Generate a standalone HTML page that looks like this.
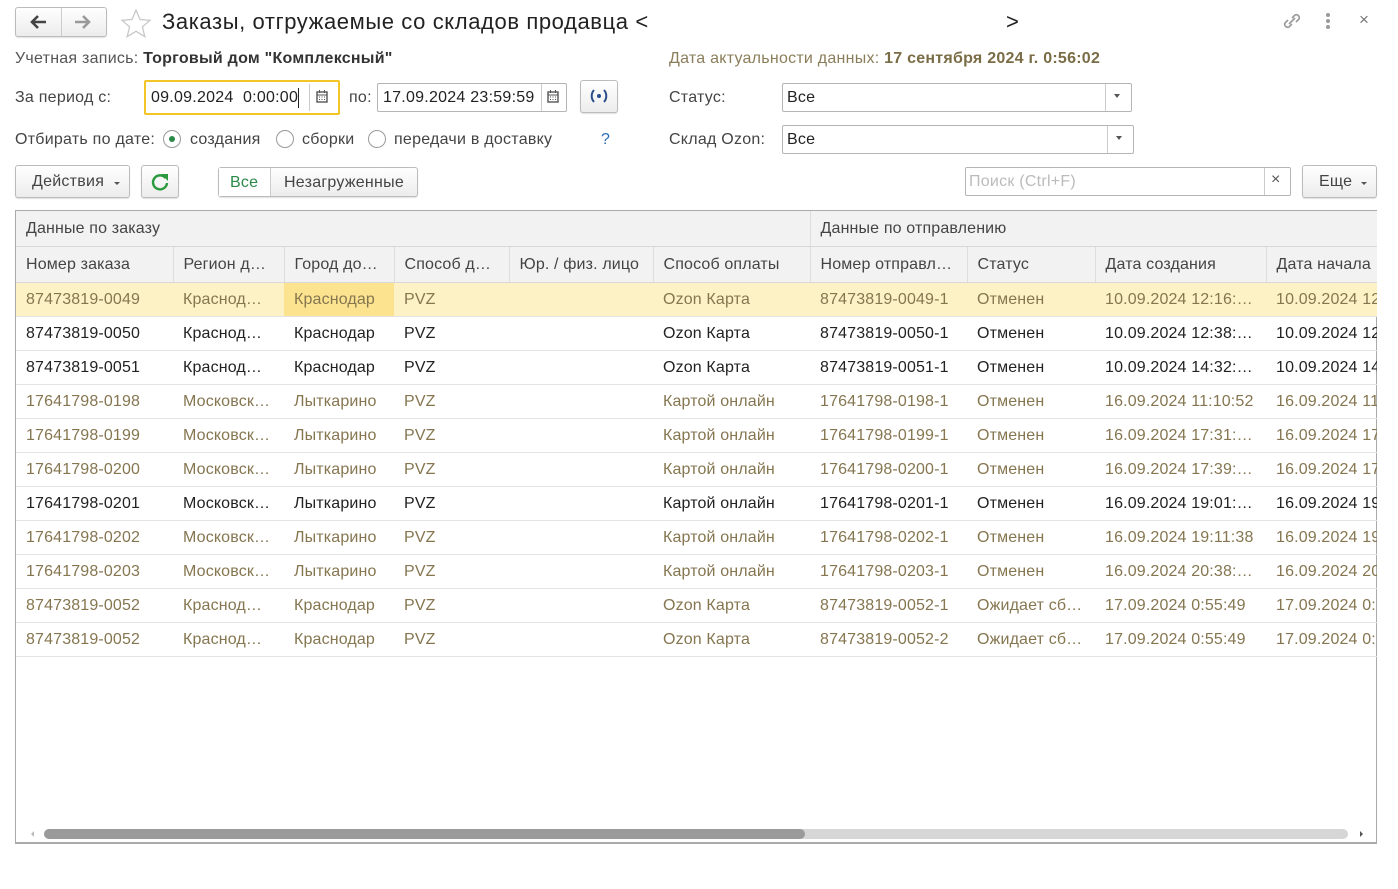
<!DOCTYPE html>
<html><head><meta charset="utf-8"><style>
*{box-sizing:border-box;margin:0;padding:0}
body{width:1398px;height:889px;background:#fff;font-family:"Liberation Sans",Arial,sans-serif;font-size:16px;color:#333;position:relative;overflow:hidden}
.a{position:absolute;white-space:nowrap;letter-spacing:0.25px}
.btn{position:absolute;border:1px solid #bcbcbc;border-radius:3px;background:linear-gradient(#fff,#ececec);box-shadow:0 1px 1px rgba(0,0,0,.12)}
.inp{position:absolute;border:1px solid #b5b5b5;border-radius:2px;background:#fff}
.radio{position:absolute;width:18px;height:18px;border:1px solid #999;border-radius:50%;background:#fff}
table{position:absolute;left:16px;top:211px;border-collapse:collapse;table-layout:fixed;width:1380px}
td{height:34px;padding:2px 10px 0;white-space:nowrap;overflow:hidden;text-overflow:ellipsis;border-bottom:1px solid #e4e4e4;font-size:16px;letter-spacing:0.15px}
tr.h td{background:#f2f2f2;border-right:1px solid #ddd;border-bottom:1px solid #d8d8d8;color:#444;height:36px}
tr.g td{background:#f2f2f2;color:#444;border-bottom:1px solid #d8d8d8;height:35px}
.o td{color:#857650}
.k td{color:#222}
.s td{background:#fdf2c6;color:#857650}
</style></head><body>
<div class="btn" style="left:15px;top:7px;width:92px;height:30px"></div>
<div class="a" style="left:61px;top:8px;width:1px;height:28px;background:#ccc"></div>
<svg class="a" style="left:28px;top:13px" width="20" height="18"><path d="M18 9H5M10 3L4 9l6 6" stroke="#444" stroke-width="2.6" fill="none"/></svg>
<svg class="a" style="left:73px;top:13px" width="20" height="18"><path d="M2 9h13M10 3l6 6-6 6" stroke="#999" stroke-width="2.6" fill="none"/></svg>
<svg class="a" style="left:120px;top:8px" width="32" height="30"><path d="M16 2l4 9.5 10 .8-7.6 6.5 2.4 9.8L16 23.3 7.2 28.6l2.4-9.8L2 12.3l10-.8z" fill="none" stroke="#c8c8c8" stroke-width="1.3"/></svg>
<div class="a" style="left:162px;top:9px;font-size:22px;color:#222;letter-spacing:0.6px">Заказы, отгружаемые со складов продавца &lt;</div>
<div class="a" style="left:1006px;top:9px;font-size:22px;color:#222">&gt;</div>
<svg class="a" style="left:1280px;top:9px" width="24" height="24"><path d="M9 15l6-6M8 11l-3 3a3 3 0 004 4l3-3M16 13l3-3a3 3 0 00-4-4l-3 3" stroke="#999" stroke-width="1.6" fill="none"/></svg>
<div class="a" style="left:1326px;top:13px;width:4px;height:4px;background:#999;border-radius:2px;box-shadow:0 6px 0 #999,0 12px 0 #999"></div>
<div class="a" style="left:1359px;top:10px;color:#777;font-size:17px">×</div>

<div class="a" style="left:15px;top:50px;color:#555">Учетная запись: <b style="color:#333">Торговый дом "Комплексный"</b></div>
<div class="a" style="left:669px;top:50px;color:#8a7d5a">Дата актуальности данных: <b style="color:#7a6c45">17 сентября 2024 г. 0:56:02</b></div>

<div class="a" style="left:15px;top:89px;color:#444">За период с:</div>
<div class="inp" style="left:144px;top:80px;width:196px;height:35px;border:2px solid #f3c526"></div>
<div class="a" style="left:151px;top:89px;color:#222">09.09.2024&nbsp; 0:00:00</div>
<div class="a" style="left:298px;top:88px;width:1px;height:20px;background:#222"></div>
<div class="a" style="left:309px;top:84px;width:1px;height:27px;background:#ccc"></div>
<svg class="a" style="left:316px;top:90px" width="12" height="13"><rect x="1" y="2" width="10" height="10" fill="none" stroke="#555" stroke-width="1.4"/><path d="M1 5h10M3 7h1M5.5 7h1M8 7h1M3 9.5h1M5.5 9.5h1M8 9.5h1M3.5 0v3M8.5 0v3" stroke="#555"/></svg>
<div class="a" style="left:349px;top:89px;color:#444">по:</div>
<div class="inp" style="left:377px;top:83px;width:190px;height:29px"></div>
<div class="a" style="left:383px;top:89px;color:#222">17.09.2024 23:59:59</div>
<div class="a" style="left:541px;top:84px;width:1px;height:27px;background:#ccc"></div>
<svg class="a" style="left:547px;top:90px" width="12" height="13"><rect x="1" y="2" width="10" height="10" fill="none" stroke="#555" stroke-width="1.4"/><path d="M1 5h10M3 7h1M5.5 7h1M8 7h1M3 9.5h1M5.5 9.5h1M8 9.5h1M3.5 0v3M8.5 0v3" stroke="#555"/></svg>
<div class="btn" style="left:580px;top:80px;width:38px;height:33px"></div>
<svg class="a" style="left:588px;top:88px" width="22" height="16"><path d="M6 2a9 9 0 000 12M16 2a9 9 0 010 12" stroke="#2a4e8a" stroke-width="2" fill="none"/><circle cx="11" cy="8" r="2" fill="#2a4e8a"/></svg>
<div class="a" style="left:669px;top:89px;color:#444">Статус:</div>
<div class="inp" style="left:782px;top:83px;width:350px;height:29px"></div>
<div class="a" style="left:787px;top:89px;color:#222">Все</div>
<div class="a" style="left:1105px;top:84px;width:1px;height:27px;background:#ccc"></div>
<div class="a" style="left:1114px;top:94px;border:3px solid transparent;border-top:4px solid #555"></div>

<div class="a" style="left:15px;top:131px;color:#444">Отбирать по дате:</div>
<div class="radio" style="left:163px;top:130px"></div><div class="a" style="left:169px;top:136px;width:6px;height:6px;border-radius:3px;background:#2b8a4a"></div>
<div class="a" style="left:190px;top:131px;color:#444">создания</div>
<div class="radio" style="left:276px;top:130px"></div>
<div class="a" style="left:302px;top:131px;color:#444">сборки</div>
<div class="radio" style="left:368px;top:130px"></div>
<div class="a" style="left:394px;top:131px;color:#444">передачи в доставку</div>
<div class="a" style="left:601px;top:131px;color:#2a6bb5">?</div>
<div class="a" style="left:669px;top:131px;color:#444">Склад Ozon:</div>
<div class="inp" style="left:782px;top:125px;width:352px;height:29px"></div>
<div class="a" style="left:787px;top:131px;color:#222">Все</div>
<div class="a" style="left:1107px;top:126px;width:1px;height:27px;background:#ccc"></div>
<div class="a" style="left:1116px;top:136px;border:3px solid transparent;border-top:4px solid #555"></div>

<div class="btn" style="left:15px;top:165px;width:115px;height:33px"></div>
<div class="a" style="left:32px;top:173px;color:#444">Действия</div>
<div class="a" style="left:114px;top:182px;border:3px solid transparent;border-top:3px solid #555"></div>
<div class="btn" style="left:141px;top:165px;width:38px;height:33px"></div>
<svg class="a" style="left:150px;top:172px" width="20" height="20"><path d="M15.5 6A7 7 0 1017 11" stroke="#2b9a3e" stroke-width="2.4" fill="none"/><path d="M11 2h7v7z" fill="#2b9a3e"/></svg>
<div class="btn" style="left:218px;top:167px;width:200px;height:30px"></div>
<div class="a" style="left:219px;top:168px;width:51px;height:28px;background:#fff"></div>
<div class="a" style="left:270px;top:168px;width:1px;height:28px;background:#ccc"></div>
<div class="a" style="left:230px;top:174px;color:#2b8a4a">Все</div>
<div class="a" style="left:284px;top:174px;color:#444">Незагруженные</div>
<div class="inp" style="left:965px;top:167px;width:326px;height:29px"></div>
<div class="a" style="left:1264px;top:168px;width:1px;height:27px;background:#ccc"></div>
<div class="a" style="left:969px;top:173px;color:#bbb">Поиск (Ctrl+F)</div>
<div class="a" style="left:1271px;top:171px;color:#555">×</div>
<div class="btn" style="left:1302px;top:165px;width:75px;height:33px"></div>
<div class="a" style="left:1319px;top:173px;color:#444">Еще</div>
<div class="a" style="left:1361px;top:182px;border:3px solid transparent;border-top:3px solid #555"></div>

<div class="a" style="left:15px;top:210px;width:1362px;height:634px;border:1px solid #aaa;border-bottom:2px solid #aaa"></div>
<table>
<colgroup><col style="width:157px"><col style="width:111px"><col style="width:110px"><col style="width:115px"><col style="width:144px"><col style="width:157px"><col style="width:157px"><col style="width:128px"><col style="width:171px"><col style="width:130px"></colgroup>
<tr class="g"><td colspan="6" style="border-right:1px solid #ddd">Данные по заказу</td><td colspan="4">Данные по отправлению</td></tr>
<tr class="h"><td>Номер заказа</td><td>Регион д…</td><td>Город до…</td><td>Способ д…</td><td>Юр. / физ. лицо</td><td>Способ оплаты</td><td>Номер отправл…</td><td>Статус</td><td>Дата создания</td><td style="text-overflow:clip">Дата начала</td></tr>
<tr class="s"><td>87473819-0049</td><td>Краснод…</td><td style="background:#fbe38f">Краснодар</td><td>PVZ</td><td></td><td>Ozon Карта</td><td>87473819-0049-1</td><td>Отменен</td><td>10.09.2024 12:16:…</td><td style="text-overflow:clip">10.09.2024 12</td></tr>
<tr class="k"><td>87473819-0050</td><td>Краснод…</td><td>Краснодар</td><td>PVZ</td><td></td><td>Ozon Карта</td><td>87473819-0050-1</td><td>Отменен</td><td>10.09.2024 12:38:…</td><td style="text-overflow:clip">10.09.2024 12</td></tr>
<tr class="k"><td>87473819-0051</td><td>Краснод…</td><td>Краснодар</td><td>PVZ</td><td></td><td>Ozon Карта</td><td>87473819-0051-1</td><td>Отменен</td><td>10.09.2024 14:32:…</td><td style="text-overflow:clip">10.09.2024 14</td></tr>
<tr class="o"><td>17641798-0198</td><td>Московск…</td><td>Лыткарино</td><td>PVZ</td><td></td><td>Картой онлайн</td><td>17641798-0198-1</td><td>Отменен</td><td>16.09.2024 11:10:52</td><td style="text-overflow:clip">16.09.2024 11</td></tr>
<tr class="o"><td>17641798-0199</td><td>Московск…</td><td>Лыткарино</td><td>PVZ</td><td></td><td>Картой онлайн</td><td>17641798-0199-1</td><td>Отменен</td><td>16.09.2024 17:31:…</td><td style="text-overflow:clip">16.09.2024 17</td></tr>
<tr class="o"><td>17641798-0200</td><td>Московск…</td><td>Лыткарино</td><td>PVZ</td><td></td><td>Картой онлайн</td><td>17641798-0200-1</td><td>Отменен</td><td>16.09.2024 17:39:…</td><td style="text-overflow:clip">16.09.2024 17</td></tr>
<tr class="k"><td>17641798-0201</td><td>Московск…</td><td>Лыткарино</td><td>PVZ</td><td></td><td>Картой онлайн</td><td>17641798-0201-1</td><td>Отменен</td><td>16.09.2024 19:01:…</td><td style="text-overflow:clip">16.09.2024 19</td></tr>
<tr class="o"><td>17641798-0202</td><td>Московск…</td><td>Лыткарино</td><td>PVZ</td><td></td><td>Картой онлайн</td><td>17641798-0202-1</td><td>Отменен</td><td>16.09.2024 19:11:38</td><td style="text-overflow:clip">16.09.2024 19</td></tr>
<tr class="o"><td>17641798-0203</td><td>Московск…</td><td>Лыткарино</td><td>PVZ</td><td></td><td>Картой онлайн</td><td>17641798-0203-1</td><td>Отменен</td><td>16.09.2024 20:38:…</td><td style="text-overflow:clip">16.09.2024 20</td></tr>
<tr class="o"><td>87473819-0052</td><td>Краснод…</td><td>Краснодар</td><td>PVZ</td><td></td><td>Ozon Карта</td><td>87473819-0052-1</td><td>Ожидает сб…</td><td>17.09.2024 0:55:49</td><td style="text-overflow:clip">17.09.2024 0:</td></tr>
<tr class="o"><td>87473819-0052</td><td>Краснод…</td><td>Краснодар</td><td>PVZ</td><td></td><td>Ozon Карта</td><td>87473819-0052-2</td><td>Ожидает сб…</td><td>17.09.2024 0:55:49</td><td style="text-overflow:clip">17.09.2024 0:</td></tr>
</table>
<div class="a" style="left:1377px;top:210px;width:21px;height:640px;background:#fff"></div>
<div class="a" style="left:44px;top:829px;width:1304px;height:10px;border-radius:5px;background:#d6d6d6"></div>
<div class="a" style="left:44px;top:829px;width:761px;height:10px;border-radius:5px;background:#9a9a9a"></div>
<div class="a" style="left:28px;top:831px;border:3px solid transparent;border-right:3px solid #bbb"></div>
<div class="a" style="left:1360px;top:831px;border:3px solid transparent;border-left:3px solid #555"></div>
</body></html>
